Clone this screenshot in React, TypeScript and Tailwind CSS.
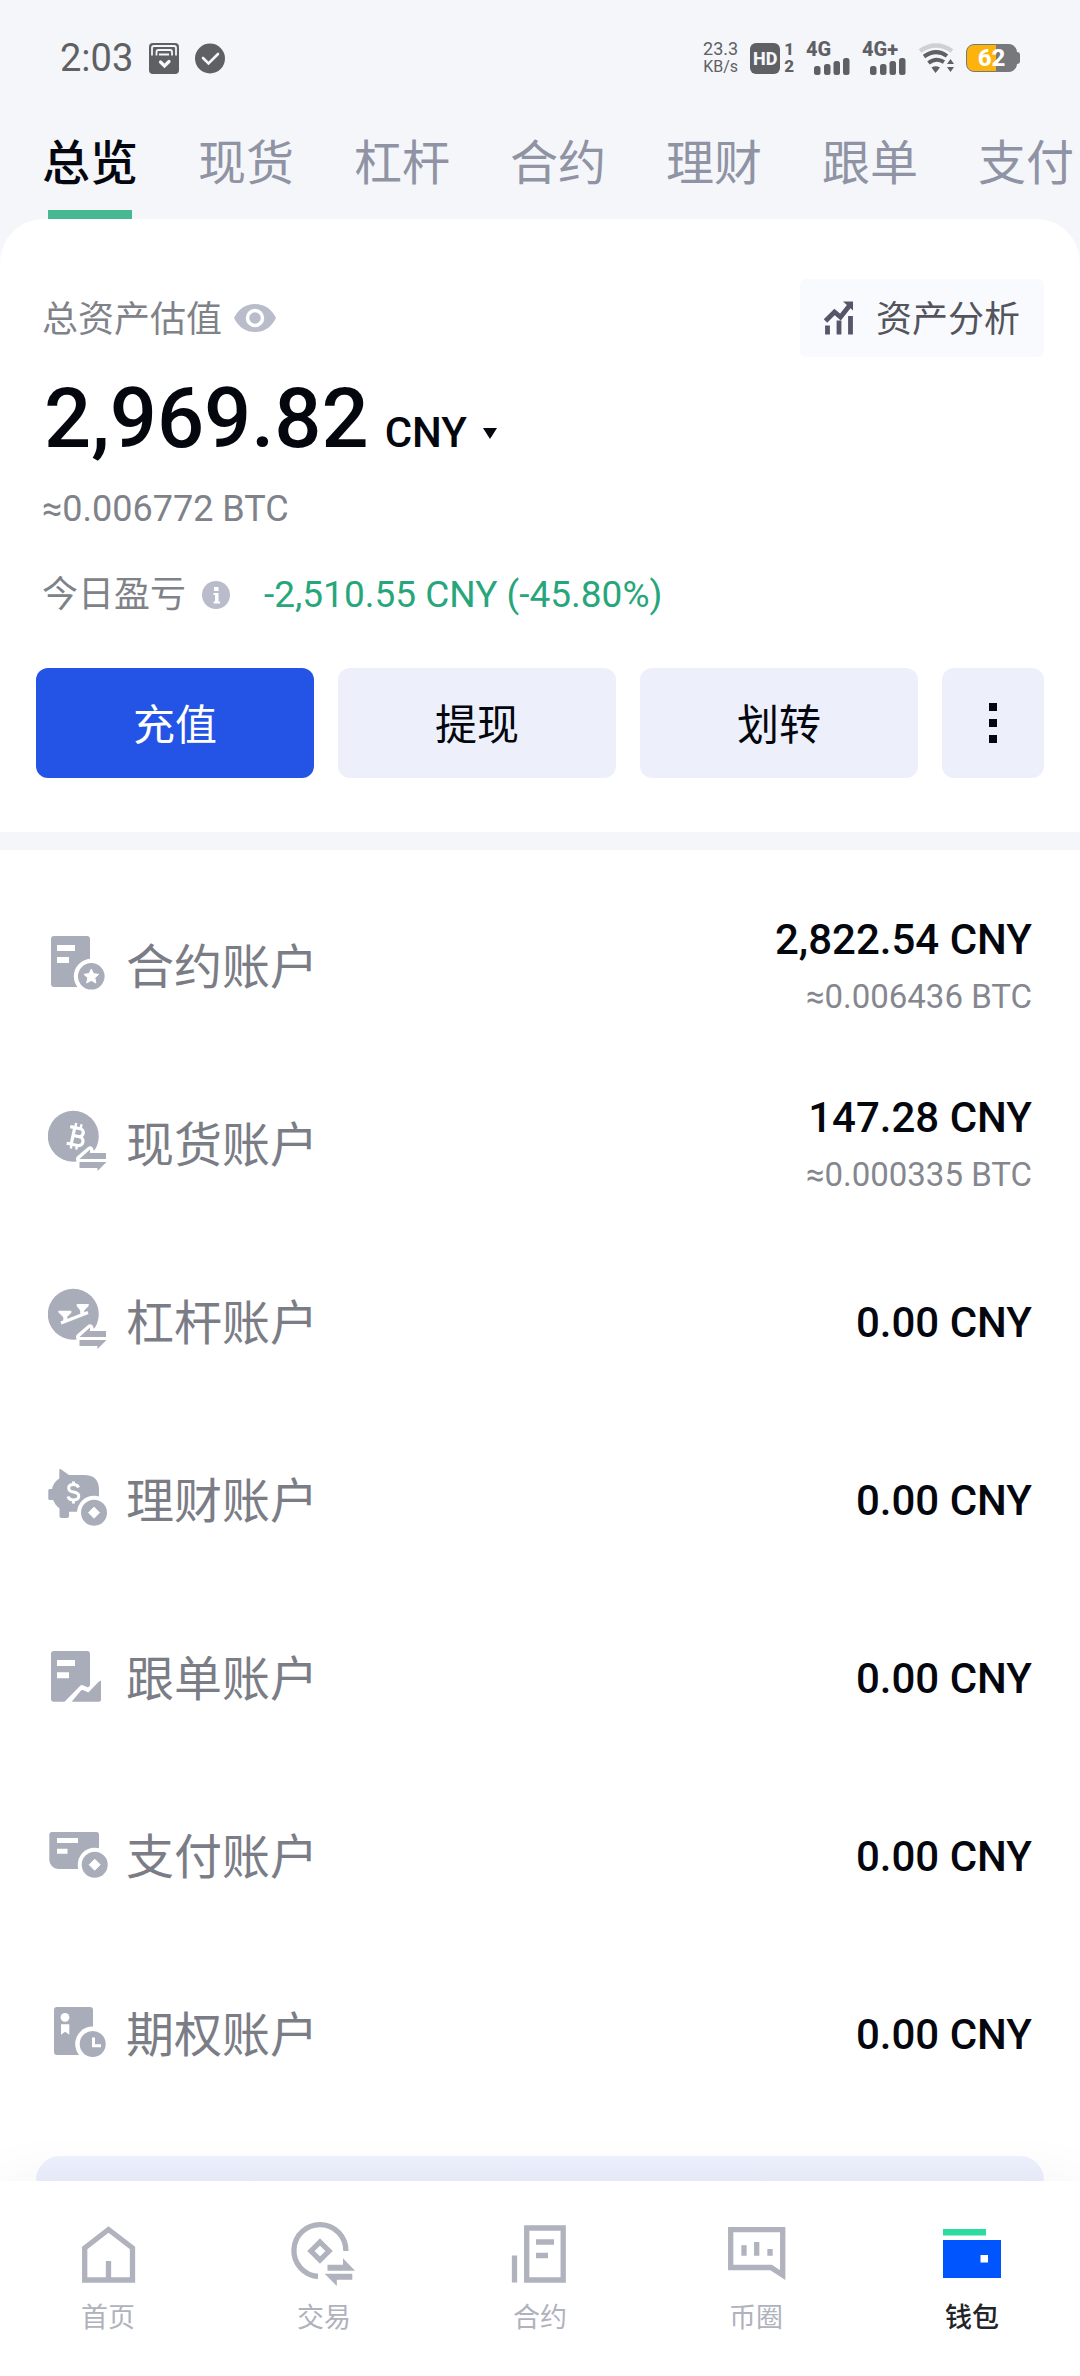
import { ReactNode, useState } from "react";

const tabs = ["总览", "现货", "杠杆", "合约", "理财", "跟单", "支付"];

// small arrows in the lower right corner of the round icons
const SwapArrows = () => (
  <>
    <path
      d="M31.5 45 42 36V40H58v5Z"
      fill="#fff"
      stroke="#fff"
      strokeWidth="7"
      strokeLinejoin="round"
    />
    <path d="M31 48H58L49.5 57V54H31Z" fill="#fff" stroke="#fff" strokeWidth="4" />
    <path d="M31.5 45 42 35.5V39H58v6Z" />
    <path d="M31.5 48H58.5L49.5 57V54H31.5Z" />
  </>
);

const CoinBadge = ({ cx, cy }: { cx: number; cy: number }) => (
  <>
    <circle cx={cx} cy={cy} r="17" fill="#fff" />
    <circle cx={cx} cy={cy} r="13" />
    <path
      d={`M${cx} ${cy - 5.5} l5.5 5.5 -5.5 5.5 -5.5 -5.5Z`}
      fill="#fff"
      stroke="#fff"
      strokeLinejoin="round"
    />
  </>
);

const FuturesIcon = () => (
  <>
    <rect x="3" y="0" width="39" height="51" rx="3" />
    <path d="M9 9h18v6H9zM9 21h12v6H9z" fill="#fff" />
    <circle cx="43.3" cy="40.3" r="17.5" fill="#fff" />
    <circle cx="43.3" cy="40.3" r="13.3" />
    <path
      d="m43.3 33 2.2 4.7 5.2.6-3.9 3.5 1.1 5.2-4.6-2.6-4.6 2.6 1.1-5.2-3.9-3.5 5.2-.6Z"
      fill="#fff"
      stroke="#fff"
      strokeLinejoin="round"
    />
  </>
);

const SpotIcon = () => (
  <>
    <circle cx="25.3" cy="22.3" r="25.5" />
    <g
      transform="rotate(12 28 22)"
      fill="none"
      stroke="#fff"
      strokeWidth="3.2"
      strokeLinecap="square"
    >
      <path d="M22 14h8.500a4 4 0 0 1 0 8H25h6.500a4.300 4.300 0 0 1 0 9H22M25 14v16" />
      <path d="M25.500 13v-2.500M31 13v-2.500M25.500 34v-2M31 34v-2" strokeWidth="2.400" />
    </g>
    <SwapArrows />
  </>
);

const MarginIcon = () => (
  <>
    <circle cx="25.3" cy="22.3" r="25.5" />
    <path d="M13 31 40 20.500" stroke="#fff" strokeWidth="3" />
    <path d="M10.300 18.700h13v2l-4 4v3.500l-4 1.500v-4.500l-5-5ZM28.700 12h12v2l-4.500 4.500v2.500l-4 1v-3.500l-3.500-4.500Z" fill="#fff" />
    <SwapArrows />
  </>
);

const EarnIcon = () => (
  <>
    <path d="M11.300 0q0-1.500 1.500-.7L21 5h15c10 0 15 5 15 15v10l-9 11.700H21V46q0 2-2 2h-5.500q-2 0-2-2v-7.500Q7 35 5 30H1.500Q.3 30 .3 28.500v-8q0-1.500 1.200-1.500H4q1.500-7 7.300-10.500Z" />
    <path
      d="M30.500 17.500q-1-3-5-3-4.800 0-4.800 3.500 0 3.300 4.800 4 5.300.8 5.300 4.300t-5.300 3.700q-4.500 0-5.500-3.500M25.500 11.500v3M25.500 30v3.500"
      fill="none"
      stroke="#fff"
      strokeWidth="3"
    />
    <CoinBadge cx={46} cy={42.7} />
  </>
);

const CopyIcon = () => (
  <>
    <path d="M6 3h33a3 3 0 0 1 3 3v31.500l-2 2-4.500-2q-2-1-3.500.5L16.500 53.700H6a3 3 0 0 1-3-3V6a3 3 0 0 1 3-3Z" />
    <path d="M9 12h18v6H9zM9 24.300h12v6H9z" fill="#fff" />
    <path d="M23.700 53.700 33 42.500q1-1 2.500-.3l4.800 2.300L51 33.500q2-1.500 2 .5v17.700a2 2 0 0 1-2 2Z" />
  </>
);

const PayIcon = () => (
  <>
    <path d="M4 6h44.500A2.500 2.500 0 0 1 51 8.500V43H10.300a9 9 0 0 1-9-9V8.500A2.500 2.500 0 0 1 4 6Z" />
    <path d="M9 12h21v5H9zM9 22.700h10.500v5H9z" fill="#fff" />
    <CoinBadge cx={46.7} cy={38.7} />
  </>
);

const OptionsIcon = () => (
  <>
    <rect x="6" y="3" width="39" height="48" rx="3" />
    <circle cx="17" cy="13.3" r="4.4" fill="#fff" />
    <path d="M13 20.300h8.300v10.400l-4.100-3-4.200 3Z" fill="#fff" />
    <circle cx="44.7" cy="40" r="17.500" fill="#fff" />
    <circle cx="44.7" cy="40" r="13" />
    <path d="M45.500 33.500v8.200h7.500" fill="none" stroke="#fff" strokeWidth="3" />
  </>
);

type Account = {
  name: string;
  amount: string;
  btc?: string;
  icon: ReactNode;
};

const accounts: Account[] = [
  { name: "合约账户", amount: "2,822.54", btc: "0.006436", icon: <FuturesIcon /> },
  { name: "现货账户", amount: "147.28", btc: "0.000335", icon: <SpotIcon /> },
  { name: "杠杆账户", amount: "0.00", icon: <MarginIcon /> },
  { name: "理财账户", amount: "0.00", icon: <EarnIcon /> },
  { name: "跟单账户", amount: "0.00", icon: <CopyIcon /> },
  { name: "支付账户", amount: "0.00", icon: <PayIcon /> },
  { name: "期权账户", amount: "0.00", icon: <OptionsIcon /> },
];

const navItems = [
  {
    name: "首页",
    icon: <path d="M12.700 30 36.500 11.500 60.500 30V62H12.700ZM36.500 43v19" />,
  },
  {
    name: "交易",
    icon: (
      <>
        <path d="M57.900 33A26 26 0 1 0 30 58.500M32 24l9 9-9 9-9-9Z" />
        <path
          d="M39.500 46.700H55V40.300L67 52.700H39.500ZM36.700 55.700H64.300v6H48.800V68Z"
          fill="currentColor"
          stroke="none"
        />
      </>
    ),
  },
  {
    name: "合约",
    icon: <path d="M10.500 37.500v27M22.700 10h36.500v52H22.700ZM32 24h18M32 37.500h12" />,
  },
  {
    name: "币圈",
    icon: <path d="M10.700 11.700h52v45.500L51 49.500H10.700ZM24 27.300v10.500M36.700 24v13.800M50 31v6.800" />,
  },
  {
    name: "钱包",
    icon: (
      <g stroke="none">
        <path d="M7 11h43v6.500H7z" fill="#2bdba0" />
        <path d="M7 22h58v38H7z" fill="#0055ff" />
        <path d="M44.500 37h7.500v7.500h-7.500z" fill="#fff" />
      </g>
    ),
  },
];

const Signal = ({ label }: { label: string }) => (
  <div className="flex w-11 flex-col">
    <span className="text-[20px] font-extrabold leading-4">{label}</span>
    <svg viewBox="0 0 36 18" className="ml-2 h-[18px] w-9" fill="currentColor">
      <rect x="0" y="9" width="6.500" height="9" rx="2.500" />
      <rect x="10" y="7" width="6.500" height="11" rx="2.500" />
      <rect x="19.500" y="4" width="6.500" height="14" rx="2.500" />
      <rect x="29" y="1" width="6.500" height="17" rx="2.500" />
    </svg>
  </div>
);

const StatusBar = () => (
  <div className="flex h-[116px] items-center justify-between px-[60px] text-[#5f6063]">
    <div className="flex items-center gap-4">
      <span className="text-[38px] leading-10">2:03</span>
      <svg viewBox="0 0 30 31" className="h-[31px] w-[30px]">
        <rect width="30" height="31" rx="4" fill="currentColor" />
        <path d="M3 12.500V5q0-2 2-2h20q2 0 2 2v7.500M7.500 12.500V9q0-2 2-2h11.500q2 0 2 2v3.500M10 11.500h10" fill="none" stroke="#f4f6fa" strokeWidth="1.800" />
        <path d="m11.500 19 4 4 4.500-4.500" fill="none" stroke="#f4f6fa" strokeWidth="3.200" strokeLinecap="round" />
      </svg>
      <svg viewBox="0 0 30 31" className="h-[31px] w-[30px]">
        <circle cx="15" cy="15.500" r="15" fill="currentColor" />
        <path d="m8 15 5.500 5.500L23 11" fill="none" stroke="#f4f6fa" strokeWidth="2.600" strokeLinecap="round" />
      </svg>
    </div>
    <div className="flex items-center gap-3">
      <div className="flex flex-col items-center text-[16px] leading-[18px]">
        <span className="text-[18px]">23.3</span>
        <span>KB/s</span>
      </div>
      <div className="flex items-center gap-1">
        <span className="flex h-[31px] w-[30px] items-center justify-center rounded-md bg-[#5f6063] text-[18px] font-extrabold text-[#f4f6fa]">
          HD
        </span>
        <span className="flex flex-col text-[17px] font-extrabold leading-[17px]">
          <span>1</span>
          <span>2</span>
        </span>
      </div>
      <Signal label="4G" />
      <Signal label="4G+" />
      <svg viewBox="0 0 36 30" className="h-[30px] w-9">
        <path d="M2 8Q18-3 34 8" fill="none" stroke="#cfd0d4" strokeWidth="4.500" />
        <path d="M6 13.500Q18 5 29 13M10.500 20Q18 14 26 19" fill="none" stroke="currentColor" strokeWidth="4" />
        <path d="M13.500 24.500Q17.500 22 22 24.500L17.500 30ZM32.500 16l3.500 5h-7ZM32.500 29l3.500-5h-7Z" fill="currentColor" />
      </svg>
      <div className="flex items-center">
        <span className="flex h-7 w-[51px] items-center justify-center rounded-lg border border-[#77787b] bg-linear-to-r from-[#fcb30b] from-60% to-[#77787b] to-60% text-[24px] font-extrabold text-white">
          62
        </span>
        <span className="h-3 w-[3px] rounded-r-sm bg-[#77787b]" />
      </div>
    </div>
  </div>
);

const App = () => {
  const [activeTab, setActiveTab] = useState("总览");

  return (
    <div className="flex min-h-screen flex-col overflow-x-hidden bg-[#f4f6fa] font-[Roboto,'Noto_Sans_CJK_SC',sans-serif] text-[#05070f]">
      <header>
        <StatusBar />
        <nav className="flex h-[103px] gap-[60px] overflow-hidden pl-[42px]">
          {tabs.map((tab) => (
            <button
              key={tab}
              type="button"
              onClick={() => setActiveTab(tab)}
              className={`flex shrink-0 flex-col items-center justify-between pt-2 text-[48px] leading-[80px] ${
                tab === activeTab ? "font-medium" : "text-[#8f93a3]"
              }`}
            >
              {tab}
              {tab === activeTab && <span className="h-[9px] w-[84px] bg-[#47b891]" />}
            </button>
          ))}
        </nav>
      </header>

      <main className="flex grow flex-col rounded-t-[44px] bg-white">
        <section className="px-9 pt-[60px]">
          <div className="flex h-[78px] items-center justify-between pl-[6px] text-[36px]">
            <div className="flex items-center gap-3 text-[#808289]">
              <span className="pt-1">总资产估值</span>
              <button type="button" aria-label="隐藏资产">
                <svg viewBox="0 0 42 28" className="h-7 w-[42px]">
                  <path d="M0 14Q7 0 21 0t21 14Q35 28 21 28T0 14Z" fill="#b9bdcb" />
                  <circle cx="21" cy="14" r="7.500" fill="#b9bdcb" stroke="#fff" strokeWidth="3.500" />
                </svg>
              </button>
            </div>
            <button
              type="button"
              className="flex h-[78px] items-center gap-[22px] rounded-md bg-[#f8fafe] px-[24px] text-[#53545c]"
            >
              <svg viewBox="0 0 30 34" className="h-[34px] w-[30px]" fill="none" stroke="#56566a" strokeWidth="4.800">
                <path d="M3.500 24.500v9M15 19.500v14M26.500 15v18.500" />
                <path d="m1.500 20 9-9 6 5L26 4" />
                <path d="M19 .500h10v9Z" fill="#56566a" stroke="none" />
              </svg>
              <span className="pt-1">资产分析</span>
            </button>
          </div>

          <div className="mt-[14px] flex items-baseline gap-4 pl-[8px]">
            <span className="text-[83px] font-medium leading-[96px]">2,969.82</span>
            <button type="button" className="flex items-center gap-4 text-[42px] font-medium leading-[48px]">
              CNY
              <svg viewBox="0 0 14 11" className="h-[11px] w-[14px]">
                <path d="M0 0h14L7 11Z" fill="currentColor" />
              </svg>
            </button>
          </div>
          <p className="mt-[18px] pl-[6px] text-[36px] leading-[48px] text-[#808289]">≈0.006772 BTC</p>
          <div className="mt-[38px] flex items-center pl-[6px] text-[36px] leading-[48px]">
            <span className="text-[#808289]">今日盈亏</span>
            <button type="button" aria-label="说明" className="ml-4">
              <svg viewBox="0 0 28 28" className="size-7">
                <circle cx="14" cy="14" r="14" fill="#b9bdcb" />
                <path d="M12 6h4.500v4H12zM11.500 12h5v8.500h1.500v2h-6.500v-2h1.500v-6.500h-1.500z" fill="#fff" />
              </svg>
            </button>
            <span className="ml-[34px] text-[37px] text-[#27a67b]">-2,510.55 CNY (-45.80%)</span>
          </div>

          <div className="mt-[49px] flex h-[110px] gap-6 text-[42px]">
            <button type="button" className="flex-1 rounded-xl bg-[#2354e6] pt-1 text-white">
              充值
            </button>
            <button type="button" className="flex-1 rounded-xl bg-[#edf0fb] pt-1">
              提现
            </button>
            <button type="button" className="flex-1 rounded-xl bg-[#edf0fb] pt-1">
              划转
            </button>
            <button
              type="button"
              aria-label="更多"
              className="flex w-[102px] flex-col items-center justify-center gap-2 rounded-xl bg-[#edf0fb]"
            >
              <span className="size-2 bg-[#05070f]" />
              <span className="size-2 bg-[#05070f]" />
              <span className="size-2 bg-[#05070f]" />
            </button>
          </div>
        </section>

        <div className="mt-[54px] h-[18px] bg-[#f4f6f9]" />

        <ul className="pt-[27px]">
          {accounts.map((account) => (
            <li key={account.name}>
              <a href="#" className="flex h-[178px] items-center px-12">
                <svg viewBox="0 -6 60 72" className="h-[72px] w-[60px]" fill="#a9adb9">
                  {account.icon}
                </svg>
                <span className="ml-[18px] pt-[3px] text-[48px] text-[#7b7d86]">{account.name}</span>
                <span className={`ml-auto flex flex-col text-right leading-[57px] ${account.btc ? "pt-1" : ""}`}>
                  <span className="text-[42px] font-medium">{account.amount} CNY</span>
                  {account.btc && (
                    <span className="text-[33px] text-[#85878f]">≈{account.btc} BTC</span>
                  )}
                </span>
              </a>
            </li>
          ))}
        </ul>

        <div className="mx-9 mt-auto h-[25px] rounded-t-3xl bg-linear-to-b from-[#eef2fd] to-[#eaeefb]" />
      </main>

      <nav className="relative grid h-[195px] grid-cols-5 bg-white shadow-[0_-8px_48px_rgba(40,50,90,0.04)]">
        {navItems.map((item) => (
          <a
            key={item.name}
            href="#"
            className={`flex flex-col items-center pt-[37px] text-[27px] leading-[36px] ${
              item.name === "钱包" ? "font-medium text-[#232429]" : "text-[#b0b2bd]"
            }`}
          >
            <svg viewBox="0 0 72 72" className="size-[72px]" fill="none" stroke="currentColor" strokeWidth="5.300">
              {item.icon}
            </svg>
            <span className="mt-[10px]">{item.name}</span>
          </a>
        ))}
      </nav>
    </div>
  );
};

export default App;
